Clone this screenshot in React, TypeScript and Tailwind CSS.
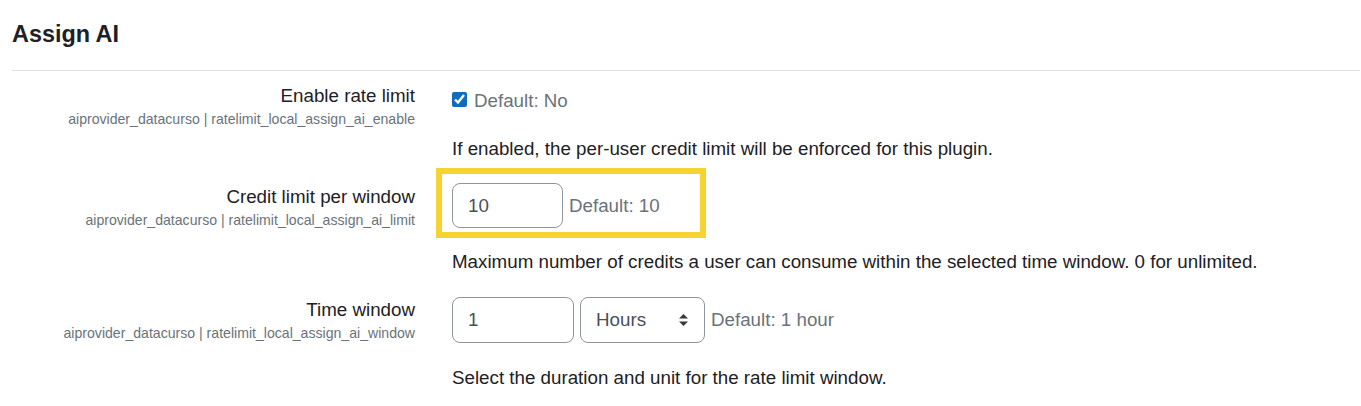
import { useState } from 'react'

const font = "font-['Liberation_Sans',Arial,sans-serif]"

function SettingRow({
  label,
  name,
  children,
}: {
  label: string
  name: string
  children: React.ReactNode
}) {
  return (
    <div className="flex mb-[20px]">
      <div className="w-[403px] shrink-0 text-right">
        <div className="text-[18.75px] leading-[28px] text-[#1d2125]">{label}</div>
        <div className="text-[14.1px] leading-[19px] text-[#6a737b]">{name}</div>
      </div>
      <div className="ml-[37px] flex-1">{children}</div>
    </div>
  )
}

function SelectArrows() {
  return (
    <svg width="11" height="14" viewBox="0 0 11 14" className="text-[#343a40]">
      <path d="M5.5 1 L10 5.5 H1 Z" fill="currentColor" />
      <path d="M5.5 13 L10 8.5 H1 Z" fill="currentColor" />
    </svg>
  )
}

export default function App() {
  const [enabled, setEnabled] = useState(true)
  const [limit, setLimit] = useState('10')
  const [win, setWin] = useState('1')

  return (
    <div className={`${font} bg-white w-[1361px] h-[406px] overflow-hidden pl-[12px] pr-[1px]`}>
      <h3 className="pt-[20px] text-[23.4px] leading-[28px] font-bold text-[#1d2125]">Assign AI</h3>
      <hr className="mt-[22px] border-t border-[#dee2e6]" />

      <div className="mt-[11px]">
        {/* Enable rate limit */}
        <SettingRow label="Enable rate limit" name="aiprovider_datacurso | ratelimit_local_assign_ai_enable">
          <div className="pt-[5px] flex items-center gap-[7px] h-[33px]">
            <input
              type="checkbox"
              checked={enabled}
              onChange={e => setEnabled(e.target.checked)}
              className="w-[15px] h-[15px] m-0 accent-[#0f6cbf] -mt-[4px]"
            />
            <span className="text-[18.75px] leading-[28px] text-[#6a737b]">Default: No</span>
          </div>
          <p className="mt-[20px] text-[18.75px] leading-[28px] text-[#1d2125]">
            If enabled, the per-user credit limit will be enforced for this plugin.
          </p>
        </SettingRow>

        {/* Credit limit */}
        <SettingRow label="Credit limit per window" name="aiprovider_datacurso | ratelimit_local_assign_ai_limit">
          <div className="relative flex items-center gap-[6px]">
            <div className="absolute left-[-16px] top-[-15px] w-[270px] h-[70px] border-[6px] border-[#f6d330] pointer-events-none" />
            <input
              value={limit}
              onChange={e => setLimit(e.target.value)}
              className="w-[111px] h-[45px] px-[15px] rounded-[8px] border border-[#8f959e] text-[18.75px] text-[#495057] outline-none"
            />
            <span className="text-[18.75px] leading-[28px] text-[#6a737b]">Default: 10</span>
          </div>
          <p className="mt-[20px] text-[18.75px] leading-[28px] text-[#1d2125]">
            Maximum number of credits a user can consume within the selected time window. 0 for unlimited.
          </p>
        </SettingRow>

        {/* Time window */}
        <SettingRow label="Time window" name="aiprovider_datacurso | ratelimit_local_assign_ai_window">
          <div className="flex items-center gap-[6px] pt-[1px]">
            <input
              value={win}
              onChange={e => setWin(e.target.value)}
              className="w-[122px] h-[46px] px-[15px] rounded-[8px] border border-[#8f959e] text-[18.75px] text-[#495057] outline-none"
            />
            <div className="w-[125px] h-[46px] pl-[15px] pr-[15px] rounded-[8px] border border-[#8f959e] flex items-center justify-between">
              <span className="text-[18.75px] text-[#495057]">Hours</span>
              <SelectArrows />
            </div>
            <span className="text-[18.75px] leading-[28px] text-[#6a737b]">Default: 1 hour</span>
          </div>
          <p className="mt-[21px] text-[18.75px] leading-[28px] text-[#1d2125]">
            Select the duration and unit for the rate limit window.
          </p>
        </SettingRow>
      </div>
    </div>
  )
}
